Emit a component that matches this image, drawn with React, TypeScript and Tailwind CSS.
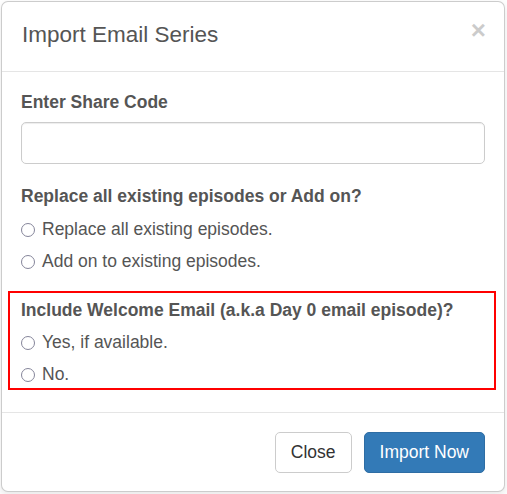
export default function App() {
  const font = { fontFamily: '"Liberation Sans", Arial, Helvetica, sans-serif' };
  return (
    <div className="pt-px pl-px bg-white w-[507px] h-[494px]" style={font}>
      <div className="w-[504px] h-[491px] border border-[rgba(0,0,0,0.2)] rounded-[7px] shadow-[0_3px_9px_rgba(0,0,0,0.1)] bg-white flex flex-col overflow-hidden">
        {/* header */}
        <div className="flex items-start justify-between pl-[20px] pr-[18px] pt-[17px] pb-[20px] border-b border-[#e5e5e5]">
          <h4 className="text-[22.5px] leading-[32px] text-[#555]">Import Email Series</h4>
          <button className="text-[26px] leading-[26px] font-bold text-black opacity-20 -mt-[2px]">×</button>
        </div>

        {/* body */}
        <div className="flex-1 px-[19px] pt-[20px] text-[17.5px] text-[#555]">
          <label className="block font-bold leading-[20px] mb-[10px]">Enter Share Code</label>
          <input className="block w-full h-[42px] border border-[#ccc] rounded-[5px] shadow-[inset_0_1px_1px_rgba(0,0,0,0.075)] px-3 outline-none" />

          <label className="block font-bold leading-[20px] mt-[22px] mb-[11px]">Replace all existing episodes or Add on?</label>
          <div className="flex flex-col gap-[7px]">
            <Radio text="Replace all existing episodes." />
            <Radio text="Add on to existing episodes." />
          </div>

          <div className="-ml-[13px] -mr-[11px] mt-[17px] pl-[11px] pr-[9px] pt-[7px] pb-[1px] border-2 border-[#f00]">
            <label className="block font-bold leading-[20px] mb-[10px]">Include Welcome Email (a.k.a Day 0 email episode)?</label>
            <div className="flex flex-col gap-[7px]">
              <Radio text="Yes, if available." />
              <Radio text="No." />
            </div>
          </div>
        </div>

        {/* footer */}
        <div className="flex justify-end gap-[12px] px-[19px] pt-[19px] pb-[18px] border-t border-[#e5e5e5] text-[17.5px]">
          <button className="h-[41px] px-[15px] border border-[#ccc] rounded-[5px] bg-white text-[#333]">Close</button>
          <button className="h-[41px] px-[15px] border border-[#2e6da4] rounded-[5px] bg-[#337ab7] text-white">Import Now</button>
        </div>
      </div>
    </div>
  );
}

function Radio({ text }: { text: string }) {
  return (
    <label className="flex items-center gap-[7px] leading-[25px] cursor-pointer">
      <span className="block w-[14px] h-[14px] min-w-[14px] rounded-full border-[1.5px] border-[#85859a] bg-white" />
      <span>{text}</span>
    </label>
  );
}
